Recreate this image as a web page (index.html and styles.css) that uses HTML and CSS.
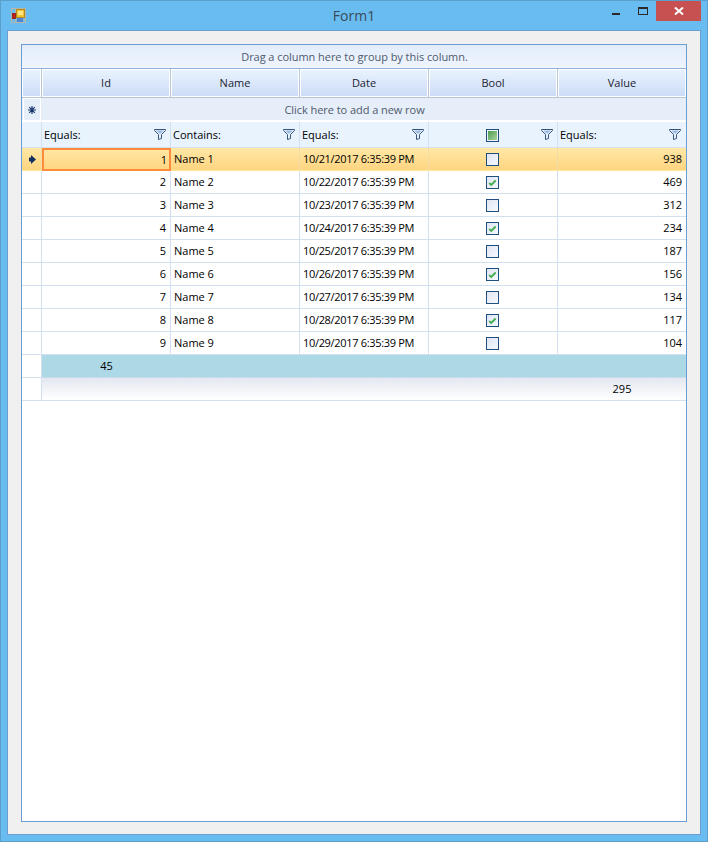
FILE: index.html
```html
<!DOCTYPE html>
<html lang="en">
<head>
<meta charset="utf-8">
<title>Form1</title>
<link rel="stylesheet" href="styles.css">
</head>
<body>
<svg class="defs" width="0" height="0" aria-hidden="true">
  <symbol id="funnel" viewBox="0 0 12 11">
    <path d="M0.5 0.5H11.5V1.5L7.5 5.5V9.5L4.5 10.5V5.5L0.5 1.5Z" fill="#eaf2fb" stroke="#34557f" stroke-width="1"/>
    <path d="M2.2 1.5H9.8L6.8 4.6H5.2Z" fill="#9fbde0"/>
  </symbol>
  <symbol id="check" viewBox="0 0 12 12">
    <path d="M2.4 6.6L4.6 8.6L9.4 3.8" fill="none" stroke="#45ad50" stroke-width="2"/>
  </symbol>
</svg>
<div class="window">
  <header class="titlebar">
    <svg class="app-icon" width="15" height="15" viewBox="0 0 15 15">
      <rect x="0.5" y="0.5" width="14" height="14" fill="none" stroke="#b5b5a8"/>
      <path d="M0 5.5H4M4.5 0V15M0 10.5H4M4 11.5H15" stroke="#b5b5a8"/>
      <rect x="5.5" y="1.5" width="8" height="8" fill="#f2c230" stroke="#b08a20"/>
      <rect x="7" y="3" width="5" height="4" fill="#fbe68a"/>
      <rect x="1.5" y="5.5" width="3" height="5" fill="#c0201c" stroke="#8a1412" stroke-width="0.8"/>
      <rect x="6" y="10" width="6" height="4" fill="#4f86d8"/>
    </svg>
    <span class="title">Form1</span>
    <div class="caption-buttons">
      <span class="btn-min"></span>
      <span class="btn-max"></span>
      <span class="btn-close">
        <svg width="10" height="8" viewBox="0 0 10 8"><path d="M1 0.5L9 7.5M9 0.5L1 7.5" stroke="#fff" stroke-width="2"/></svg>
      </span>
    </div>
  </header>
  <main class="client">
    <section class="gridview">
      <div class="group-panel">Drag a column here to group by this column.</div>
      <div class="row header-row">
        <div class="hcell"></div>
        <div class="hcell">Id</div>
        <div class="hcell">Name</div>
        <div class="hcell">Date</div>
        <div class="hcell">Bool</div>
        <div class="hcell">Value</div>
      </div>
      <div class="new-row">
        <div class="new-ind"><svg width="8" height="8" viewBox="0 0 8 8"><path d="M4 0V8M0 4H8M1.2 1.2L6.8 6.8M6.8 1.2L1.2 6.8" stroke="#1c3a6e" stroke-width="1.2"/></svg></div>
        <div class="new-text">Click here to add a new row</div>
      </div>
      <div class="row filter-row">
        <div class="cell"></div>
        <div class="cell fcell"><span>Equals:</span><svg class="funnel"><use href="#funnel"/></svg></div>
        <div class="cell fcell"><span>Contains:</span><svg class="funnel"><use href="#funnel"/></svg></div>
        <div class="cell fcell"><span>Equals:</span><svg class="funnel"><use href="#funnel"/></svg></div>
        <div class="cell fcell fbool"><span class="box box-ind"><i></i></span><svg class="funnel"><use href="#funnel"/></svg></div>
        <div class="cell fcell"><span>Equals:</span><svg class="funnel"><use href="#funnel"/></svg></div>
      </div>
      <div class="row data-row selected">
        <div class="cell ind"><svg width="7" height="9" viewBox="0 0 7 9"><path d="M2 0L7 4.5L2 9V6.5H0V2.5H2Z" fill="#14305f"/></svg></div>
        <div class="cell num current">1</div><div class="cell">Name 1</div><div class="cell date">10/21/2017 6:35:39 PM</div>
        <div class="cell ctr"><span class="box"></span></div><div class="cell num">938</div>
      </div>
      <div class="row data-row">
        <div class="cell"></div><div class="cell num">2</div><div class="cell">Name 2</div><div class="cell date">10/22/2017 6:35:39 PM</div>
        <div class="cell ctr"><span class="box"><svg viewBox="0 0 12 12"><use href="#check"/></svg></span></div><div class="cell num">469</div>
      </div>
      <div class="row data-row">
        <div class="cell"></div><div class="cell num">3</div><div class="cell">Name 3</div><div class="cell date">10/23/2017 6:35:39 PM</div>
        <div class="cell ctr"><span class="box"></span></div><div class="cell num">312</div>
      </div>
      <div class="row data-row">
        <div class="cell"></div><div class="cell num">4</div><div class="cell">Name 4</div><div class="cell date">10/24/2017 6:35:39 PM</div>
        <div class="cell ctr"><span class="box"><svg viewBox="0 0 12 12"><use href="#check"/></svg></span></div><div class="cell num">234</div>
      </div>
      <div class="row data-row">
        <div class="cell"></div><div class="cell num">5</div><div class="cell">Name 5</div><div class="cell date">10/25/2017 6:35:39 PM</div>
        <div class="cell ctr"><span class="box"></span></div><div class="cell num">187</div>
      </div>
      <div class="row data-row">
        <div class="cell"></div><div class="cell num">6</div><div class="cell">Name 6</div><div class="cell date">10/26/2017 6:35:39 PM</div>
        <div class="cell ctr"><span class="box"><svg viewBox="0 0 12 12"><use href="#check"/></svg></span></div><div class="cell num">156</div>
      </div>
      <div class="row data-row">
        <div class="cell"></div><div class="cell num">7</div><div class="cell">Name 7</div><div class="cell date">10/27/2017 6:35:39 PM</div>
        <div class="cell ctr"><span class="box"></span></div><div class="cell num">134</div>
      </div>
      <div class="row data-row">
        <div class="cell"></div><div class="cell num">8</div><div class="cell">Name 8</div><div class="cell date">10/28/2017 6:35:39 PM</div>
        <div class="cell ctr"><span class="box"><svg viewBox="0 0 12 12"><use href="#check"/></svg></span></div><div class="cell num">117</div>
      </div>
      <div class="row data-row">
        <div class="cell"></div><div class="cell num">9</div><div class="cell">Name 9</div><div class="cell date">10/29/2017 6:35:39 PM</div>
        <div class="cell ctr"><span class="box"></span></div><div class="cell num">104</div>
      </div>
      <div class="row summary-row">
        <div class="cell"></div>
        <div class="sum-blue">
          <div class="sum-val">45</div><div></div><div></div><div></div><div></div>
        </div>
      </div>
      <div class="row total-row">
        <div class="cell"></div>
        <div class="sum-hatch">
          <div></div><div></div><div></div><div></div><div class="sum-val total-val">295</div>
        </div>
      </div>
    </section>
  </main>
</div>
</body>
</html>
```

FILE: styles.css
```css
* { box-sizing: border-box; }
html, body { margin: 0; padding: 0; height: 100%; }
body {
  font-family: "Open Sans", "Noto Sans", "Liberation Sans", sans-serif;
  font-size: 11px;
  color: #000;
  overflow: hidden;
}
.defs { position: absolute; }
.window {
  width: 708px;
  height: 842px;
  background: #69bcf0;
  border: 1px solid #5a9ec9;
  display: flex;
  flex-direction: column;
  padding: 0 6px 6px;
}
.titlebar {
  height: 29px;
  flex: none;
  position: relative;
  display: flex;
  align-items: flex-start;
  justify-content: center;
}
.app-icon { position: absolute; left: 4px; top: 7px; }
.title {
  font-size: 14px;
  line-height: 20px;
  margin-top: 5px;
  color: #3a4a5a;
}
.caption-buttons { position: absolute; right: 0; top: 0; display: flex; }
.btn-min {
  position: absolute;
  right: 81px;
  top: 12px;
  width: 8px;
  height: 2px;
  background: #2a2a2a;
}
.btn-max {
  position: absolute;
  right: 53px;
  top: 6px;
  width: 10px;
  height: 8px;
  border: 1px solid #2a2a2a;
  border-top-width: 2px;
}
.btn-close {
  width: 45px;
  height: 20px;
  background: #c75050;
  display: flex;
  align-items: center;
  justify-content: center;
}
.client {
  flex: 1;
  background: #f0f0f0;
  border: 1px solid #6b9fd4;
  padding: 13px 13px 12px;
  display: flex;
}
.gridview {
  flex: 1;
  background: #fff;
  border: 1px solid #6b9fd4;
}
.group-panel {
  height: 23px;
  background: linear-gradient(#e2ecfa, #f0f5ff);
  color: #4e5a6c;
  text-align: center;
  line-height: 23px;
  letter-spacing: -0.05px;
  padding-left: 1px;
}
.row {
  display: grid;
  grid-template-columns: 20px 129px 129px 129px 129px 128px;
}
.header-row {
  height: 30px;
  background: #b9c6d6;
  border-top: 1px solid #8fb0dc;
  border-bottom: 1px solid #b9c6d6;
}
.hcell {
  background: linear-gradient(#e9f2fd, #cdddf8);
  border: 1px solid #fff;
  margin-right: 1px;
  display: flex;
  align-items: center;
  justify-content: center;
  color: #1c1c30;
  padding-bottom: 1px;
}
.hcell:last-child { margin-right: 0; }
.new-row {
  height: 24px;
  background: #e6eef9;
  border-bottom: 2px solid #fff;
  position: relative;
  padding-top: 1px;
}
.new-ind {
  position: absolute;
  left: 1px;
  top: 0;
  bottom: 0;
  width: 18px;
  border: 1px solid #fff;
  border-bottom: none;
  display: flex;
  align-items: center;
  justify-content: center;
  padding-right: 1px;
}
.new-text {
  text-align: center;
  line-height: 21px;
  color: #4e5a6c;
  letter-spacing: -0.05px;
  padding-left: 1px;
}
.cell {
  display: flex;
  align-items: center;
  padding: 0 3px 0 2px;
  border-right: 1px solid #d2e0f0;
  border-bottom: 1px solid #d2e0f0;
  min-width: 0;
}
.cell:last-child { border-right: none; }
.filter-row { height: 26px; background: #e8f3fe; }
.filter-row .cell { border-bottom-color: #d4e2ee; }
.fcell { justify-content: space-between; padding-right: 4px; }
.fcell:last-child { padding-right: 5px; }
.fbool { padding-left: 57px; }
.fbool .box { margin-top: 2px; }
.funnel { width: 12px; height: 11px; flex: none; }
.data-row { height: 23px; background: #fff; }
.data-row .cell { padding: 0 3px 2px 3px; }
.data-row .num { justify-content: flex-end; padding-right: 4px; }
.data-row .ctr { justify-content: center; padding: 0 4px 0 3px; }
.data-row .ind { padding: 0 0 0 1px; }
.date { letter-spacing: -0.32px; }
.selected {
  background: linear-gradient(#ffe8a6, #ffd47e);
}
.selected .cell { border-bottom: 1px solid #ffe79e; border-right-color: #f0dca8; }
.selected .ind { justify-content: center; }
.selected .current {
  border: 2px solid #fe8a3a;
  padding: 0 2px 0 3px;
}
.box {
  display: block;
  width: 13px;
  height: 13px;
  border: 1px solid #1f4e80;
  background: linear-gradient(135deg, #dfe5f3, #f6f8fc);
}
.box svg { display: block; width: 11px; height: 11px; }
.box-ind { padding: 1px; background: #eef3fa; }
.box-ind i {
  display: block;
  width: 9px;
  height: 9px;
  background: linear-gradient(135deg, #4f9a50, #a8d4a0);
}
.summary-row, .total-row { height: 23px; }
.sum-blue, .sum-hatch {
  grid-column: 2 / -1;
  display: grid;
  grid-template-columns: 129px 129px 129px 129px 128px;
  border-bottom: 1px solid #d2e0f0;
}
.sum-blue { background: #add8e6; border-bottom-color: #c9dcec; }
.sum-hatch {
  background:
    repeating-linear-gradient(45deg, rgba(255,255,255,.14) 0 1px, transparent 1px 3px),
    linear-gradient(#e2e6ef, #ffffff);
}
.sum-val { text-align: center; line-height: 22px; }
```
